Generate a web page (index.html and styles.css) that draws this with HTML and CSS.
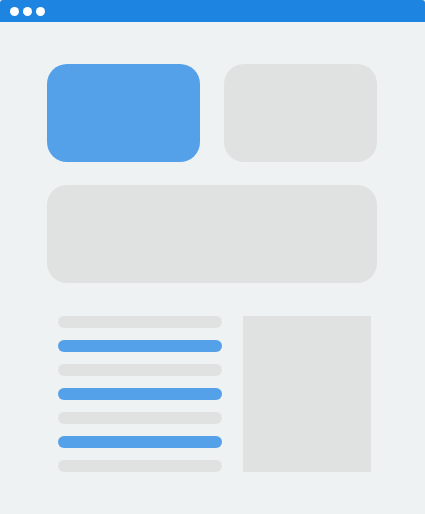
FILE: index.html
```html
<!DOCTYPE html>
<html>
<head>
<meta charset="utf-8">
<link rel="stylesheet" href="styles.css">
</head>
<body>
<div class="window">
  <div class="titlebar">
    <span class="dot"></span><span class="dot"></span><span class="dot"></span>
  </div>
  <div class="content">
    <div class="cards">
      <div class="card card-blue"></div>
      <div class="card"></div>
      <div class="card card-wide"></div>
    </div>
    <div class="lower">
      <div class="lines">
        <div class="line"></div>
        <div class="line line-blue"></div>
        <div class="line"></div>
        <div class="line line-blue"></div>
        <div class="line"></div>
        <div class="line line-blue"></div>
        <div class="line"></div>
      </div>
      <div class="panel"></div>
    </div>
  </div>
</div>
</body>
</html>
```

FILE: styles.css
```css
html, body {
  margin: 0;
  padding: 0;
  background: #eff2f3;
}
.window {
  width: 425px;
  height: 514px;
  background: #eff2f3;
}
.titlebar {
  height: 22px;
  background: #1e84e1;
  border-radius: 3px 3px 0 0;
  display: flex;
  align-items: center;
  gap: 4px;
  padding-left: 10px;
  box-sizing: border-box;
}
.dot {
  width: 9px;
  height: 9px;
  border-radius: 50%;
  background: #ffffff;
}
.content {
  padding: 42px 48px 0 47px;
}
.cards {
  display: grid;
  grid-template-columns: 153px 153px;
  column-gap: 24px;
  row-gap: 23px;
}
.card {
  height: 98px;
  border-radius: 20px;
  background: #dfe2e1;
}
.card-blue {
  background: #54a0e9;
}
.card-wide {
  grid-column: 1 / 3;
}
.lower {
  display: flex;
  margin-top: 33px;
  padding-left: 11px;
  gap: 21px;
}
.lines {
  display: flex;
  flex-direction: column;
  gap: 12px;
  width: 164px;
}
.line {
  height: 12px;
  border-radius: 6px;
  background: #dfe2e1;
}
.line-blue {
  background: #54a0e9;
}
.panel {
  width: 128px;
  height: 156px;
  background: #dfe2e1;
}
```
